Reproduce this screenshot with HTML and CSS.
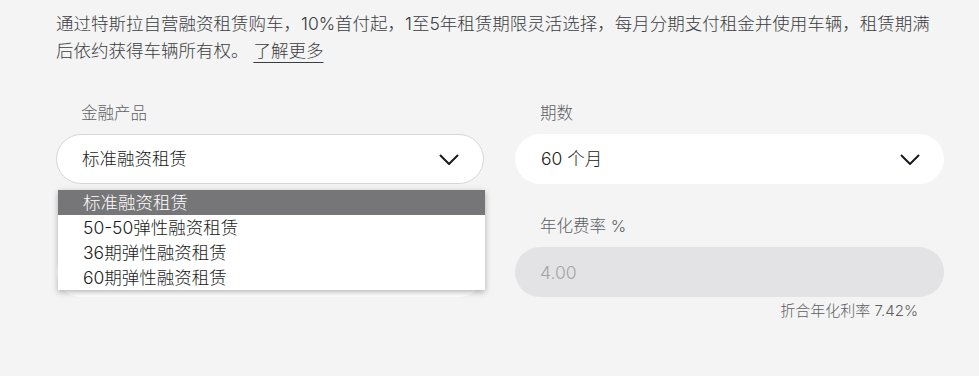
FILE: index.html
```html
<!DOCTYPE html>
<html lang="zh-CN">
<head>
<meta charset="utf-8">
<title>融资租赁</title>
<link rel="stylesheet" href="styles.css">
</head>
<body>
<main class="page">
  <p class="intro">通过特斯拉自营融资租赁购车，10%首付起，1至5年租赁期限灵活选择，每月分期支付租金并使用车辆，租赁期满后依约获得车辆所有权。 <a class="learn" href="#">了解更多</a></p>
  <div class="form">
    <div class="field">
      <div class="label">金融产品</div>
      <div class="select select--bordered">
        <span class="select-value">标准融资租赁</span>
        <svg class="chevron" width="20" height="11" viewBox="0 0 20 11"><path d="M1 1 L10 10 L19 1" fill="none" stroke="#171a20" stroke-width="2"/></svg>
        <ul class="menu">
          <li class="menu-item menu-item--active">标准融资租赁</li>
          <li class="menu-item">50-50弹性融资租赁</li>
          <li class="menu-item">36期弹性融资租赁</li>
          <li class="menu-item">60期弹性融资租赁</li>
        </ul>
      </div>
    </div>
    <div class="field">
      <div class="label">期数</div>
      <div class="select">
        <span class="select-value">60 个月</span>
        <svg class="chevron" width="20" height="11" viewBox="0 0 20 11"><path d="M1 1 L10 10 L19 1" fill="none" stroke="#171a20" stroke-width="2"/></svg>
      </div>
    </div>
    <div class="field">
      <div class="label"></div>
      <div class="input"></div>
    </div>
    <div class="field">
      <div class="label">年化费率 %</div>
      <div class="input input--disabled">4.00</div>
      <div class="hint">折合年化利率 7.42%</div>
    </div>
  </div>
</main>
</body>
</html>
```
FILE: styles.css
```css
html, body {
  margin: 0;
  padding: 0;
  background: #f4f4f4;
}
body {
  font-family: Inter, "Noto Sans CJK SC", sans-serif;
  font-weight: 300;
  color: #171a20;
}
.page {
  width: 888px;
  padding: 10px 0 0 56px;
}
.intro {
  margin: 0;
  font-size: 17.5px;
  line-height: 27px;
  color: #393c41;
}
.learn {
  color: #393c41;
  text-decoration: underline;
  text-decoration-thickness: 1px;
  text-underline-offset: 5px;
}
.form {
  margin-top: 37px;
  display: grid;
  grid-template-columns: 428px 429px;
  column-gap: 31px;
  row-gap: 30px;
}
.field {
  display: flex;
  flex-direction: column;
}
.label {
  height: 24px;
  line-height: 24px;
  padding-left: 25px;
  font-size: 16.5px;
  color: #5c5e62;
  margin-bottom: 9px;
}
.select {
  position: relative;
  box-sizing: border-box;
  height: 50px;
  border-radius: 25px;
  background: #fff;
  display: flex;
  align-items: center;
  justify-content: space-between;
  padding: 0 24px 0 26px;
  font-size: 17.5px;
}
.select--bordered {
  border: 1px solid #d6d6d8;
  padding-left: 25px;
}
.select-value {
  line-height: 24px;
}
.menu {
  position: absolute;
  top: 55px;
  left: 1px;
  width: 427px;
  margin: 0;
  padding: 0;
  list-style: none;
  background: #fff;
  box-shadow: 0 2px 6px rgba(0, 0, 0, 0.3);
  z-index: 2;
}
.menu-item {
  height: 25px;
  line-height: 25px;
  padding-left: 25px;
  font-size: 17.5px;
  color: #171a20;
}
.menu-item--active {
  background: #767577;
  color: #fff;
}
.input {
  box-sizing: border-box;
  height: 50px;
  border-radius: 25px;
  background: #fff;
  padding-left: 25px;
  display: flex;
  align-items: center;
  font-size: 17.5px;
}
.input--disabled {
  background: #e3e3e5;
  color: #a2a3a6;
}
.hint {
  margin-top: 4px;
  text-align: right;
  padding-right: 26px;
  font-size: 15px;
  line-height: 20px;
  color: #5c5e62;
}
```
